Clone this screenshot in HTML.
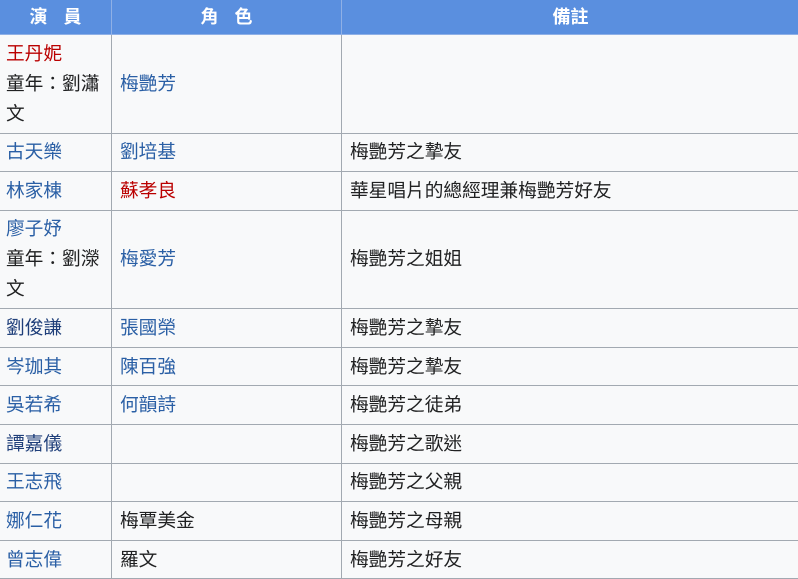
<!DOCTYPE html>
<html><head><meta charset="utf-8"><style>
*{margin:0;padding:0;box-sizing:border-box}
body{width:798px;height:576px;overflow:hidden;background:#f8f9fa;font-family:"Liberation Sans","Noto Sans CJK TC",sans-serif;font-size:18.7px;color:#202122}
table{border-collapse:collapse;position:absolute;left:-1px;top:-1px;width:801px;table-layout:fixed}
td,th{border:1px solid #a2a9b1;padding:0 0 0 8px;line-height:30px;vertical-align:middle;text-align:left;font-weight:normal}
td:first-child{padding-left:6px}
th{background:#5a8fdf;color:#fff;font-weight:bold;text-align:center;height:35px;letter-spacing:16px;padding:0 0 0 16px!important;border-color:#8fb0e6;font-size:18px;line-height:30px}
tr.r td{height:38.6px;line-height:28px}
tr.t td{height:98.5px}
.l{color:#2a5fa5}.n{color:#1f3f7a}.red{color:#ba0000}
</style></head><body>
<table>
<col style="width:112px"><col style="width:230px"><col>
<tr><th>演員</th><th>角色</th><th style="letter-spacing:0;padding:0!important">備註</th></tr>
<tr class="t"><td><span class="red">王丹妮</span><br>童年：劉瀟<br>文</td><td class="l">梅艷芳</td><td></td></tr>
<tr class="r"><td class="l">古天樂</td><td class="l">劉培基</td><td>梅艷芳之摯友</td></tr>
<tr class="r"><td class="l">林家棟</td><td class="red">蘇孝良</td><td>華星唱片的總經理兼梅艷芳好友</td></tr>
<tr class="t"><td><span class="l">廖子妤</span><br>童年：劉濴<br>文</td><td class="l">梅愛芳</td><td>梅艷芳之姐姐</td></tr>
<tr class="r"><td class="n">劉俊謙</td><td class="l">張國榮</td><td>梅艷芳之摯友</td></tr>
<tr class="r"><td class="l">岑珈其</td><td class="l">陳百強</td><td>梅艷芳之摯友</td></tr>
<tr class="r"><td class="l">吳若希</td><td class="l">何韻詩</td><td>梅艷芳之徒弟</td></tr>
<tr class="r"><td class="n">譚嘉儀</td><td></td><td>梅艷芳之歌迷</td></tr>
<tr class="r"><td class="l">王志飛</td><td></td><td>梅艷芳之父親</td></tr>
<tr class="r"><td class="l">娜仁花</td><td>梅覃美金</td><td>梅艷芳之母親</td></tr>
<tr class="r"><td class="l">曾志偉</td><td>羅文</td><td>梅艷芳之好友</td></tr>
</table>
</body></html>
